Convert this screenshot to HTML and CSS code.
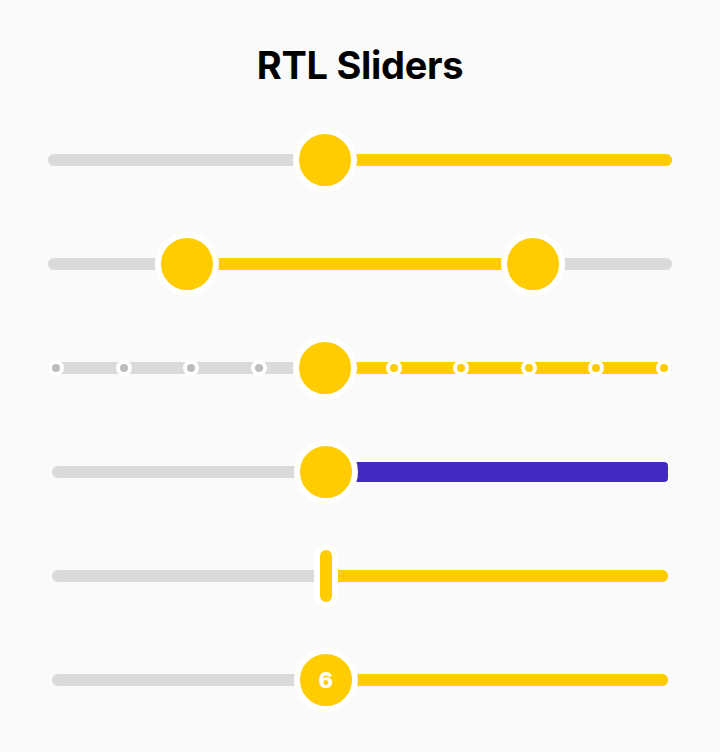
FILE: index.html
```html
<!DOCTYPE html>
<html lang="en">
<head>
<meta charset="utf-8">
<title>RTL Sliders</title>
<link rel="stylesheet" href="styles.css">
</head>
<body>
<main class="page">
  <h1 class="title">RTL Sliders</h1>

  <div class="slider">
    <div class="track">
      <div class="fill" style="left:44.444%"></div>
      <div class="thumb" style="left:44.444%"></div>
    </div>
  </div>

  <div class="slider">
    <div class="track">
      <div class="fill fill--range" style="left:22.222%; right:22.222%"></div>
      <div class="thumb" style="left:22.222%"></div>
      <div class="thumb" style="left:77.778%"></div>
    </div>
  </div>

  <div class="slider">
    <div class="track">
      <div class="fill" style="left:44.444%"></div>
      <div class="ticks">
        <span class="tick"></span>
        <span class="tick"></span>
        <span class="tick"></span>
        <span class="tick"></span>
        <span class="tick tick--on"></span>
        <span class="tick tick--on"></span>
        <span class="tick tick--on"></span>
        <span class="tick tick--on"></span>
        <span class="tick tick--on"></span>
        <span class="tick tick--on"></span>
      </div>
      <div class="thumb" style="left:44.444%"></div>
    </div>
  </div>

  <div class="slider slider--inset">
    <div class="track">
      <div class="fill fill--bar" style="left:44.444%"></div>
      <div class="thumb" style="left:44.444%"></div>
    </div>
  </div>

  <div class="slider slider--inset">
    <div class="track">
      <div class="fill" style="left:44.444%"></div>
      <div class="thumb thumb--pill" style="left:44.444%"></div>
    </div>
  </div>

  <div class="slider slider--inset">
    <div class="track">
      <div class="fill" style="left:44.444%"></div>
      <div class="thumb thumb--label" style="left:44.444%">6</div>
    </div>
  </div>
</main>
</body>
</html>
```

FILE: styles.css
```css
html, body {
  margin: 0;
  padding: 0;
  background: #fafafa;
}

body {
  font-family: Inter, "Noto Sans", "Liberation Sans", sans-serif;
  color: #000;
}

.page {
  width: 720px;
  height: 752px;
  box-sizing: border-box;
  padding: 43px 48px 0;
  display: flex;
  flex-direction: column;
}

.title {
  margin: 0 0 21px;
  height: 44px;
  line-height: 44px;
  font-size: 38px;
  font-weight: 700;
  text-align: center;
  letter-spacing: -0.3px;
}

.slider {
  height: 104px;
  display: flex;
  align-items: center;
}

.slider--inset {
  padding: 0 4px;
}

.track {
  position: relative;
  flex: 1;
  height: 12px;
  border-radius: 6px;
  background: #dadada;
}

.fill {
  position: absolute;
  top: 0;
  bottom: 0;
  right: 0;
  background: #ffcc00;
  border-radius: 0 6px 6px 0;
}

.fill--range {
  border-radius: 0;
}

.fill--bar {
  top: -4px;
  bottom: -4px;
  background: #4129c4;
  border-radius: 4px;
}

.ticks {
  position: absolute;
  left: 0;
  right: 0;
  top: -2px;
  bottom: -2px;
  display: flex;
  justify-content: space-between;
  align-items: center;
}

.tick {
  width: 8px;
  height: 8px;
  border: 4px solid #ffffff;
  border-radius: 50%;
  background: #bdbdbd;
}

.tick--on {
  background: #ffcc00;
}

.thumb {
  position: absolute;
  top: 50%;
  width: 52px;
  height: 52px;
  border: 6px solid #ffffff;
  border-radius: 50%;
  background: #ffcc00;
  transform: translate(-50%, -50%);
}

.thumb--pill {
  width: 12px;
  height: 52px;
  border-radius: 12px;
}

.thumb--label {
  display: flex;
  align-items: center;
  justify-content: center;
  color: #ffffff;
  font-size: 22px;
  font-weight: 800;
}
```
